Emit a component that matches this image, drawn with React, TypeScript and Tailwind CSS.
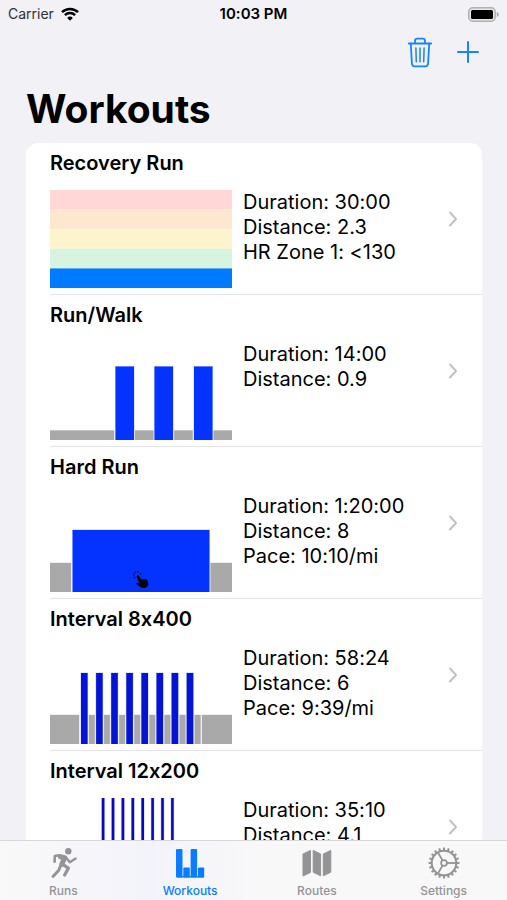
import React from "react";

type Bar = { x: number; w: number; h: number; fill: string };

type Workout = {
  name: string;
  details: string[];
  bars: Bar[];
  zones?: string[];
  tap?: boolean;
};

const GREY = "#a9a9a9";
const BLUE = "#0433ff";
const DEEP = "#0414d2";
const NAVY = "#0a08bc";
const CHART_W = 182;
const CHART_H = 98;

const intervals: Bar[] = [
  { x: 0, w: 29, h: 29, fill: GREY },
  ...Array.from({ length: 8 }, (_, i) => ({ x: 31 + i * 15.1, w: 6.6, h: 71, fill: DEEP })),
  ...Array.from({ length: 8 }, (_, i) => ({ x: 39 + i * 15.1, w: 5.8, h: 29, fill: GREY })),
  { x: 152, w: 30, h: 29, fill: GREY },
];

const sprints: Bar[] = [
  { x: 0, w: 50, h: 24, fill: GREY },
  ...Array.from({ length: 8 }, (_, i) => ({ x: 51.8 + i * 9.9, w: 2.6, h: 98, fill: NAVY })),
  { x: 132, w: 50, h: 24, fill: GREY },
];

const workouts: Workout[] = [
  {
    name: "Recovery Run",
    details: ["Duration: 30:00", "Distance: 2.3", "HR Zone 1: <130"],
    bars: [],
    zones: ["#fed7d6", "#fee7cf", "#fdf3cd", "#d7f4e0", "#007aff"],
  },
  {
    name: "Run/Walk",
    details: ["Duration: 14:00", "Distance: 0.9"],
    bars: [
      { x: 0, w: 64, h: 9.5, fill: GREY },
      { x: 65.5, w: 18.5, h: 73.5, fill: BLUE },
      { x: 85, w: 18.5, h: 9.5, fill: GREY },
      { x: 104.5, w: 18.5, h: 73.5, fill: BLUE },
      { x: 124.2, w: 18.5, h: 9.5, fill: GREY },
      { x: 144, w: 18.5, h: 73.5, fill: BLUE },
      { x: 163.7, w: 18.3, h: 9.5, fill: GREY },
    ],
  },
  {
    name: "Hard Run",
    details: ["Duration: 1:20:00", "Distance: 8", "Pace: 10:10/mi"],
    bars: [
      { x: 0, w: 21, h: 29, fill: GREY },
      { x: 22.6, w: 136.8, h: 62, fill: BLUE },
      { x: 160.5, w: 21.5, h: 29, fill: GREY },
    ],
    tap: true,
  },
  {
    name: "Interval 8x400",
    details: ["Duration: 58:24", "Distance: 6", "Pace: 9:39/mi"],
    bars: intervals,
  },
  {
    name: "Interval 12x200",
    details: ["Duration: 35:10", "Distance: 4.1"],
    bars: sprints,
  },
];

function Chart({ workout }: { workout: Workout }) {
  return (
    <svg width={CHART_W} height={CHART_H} viewBox={`0 0 ${CHART_W} ${CHART_H}`} className="shrink-0" aria-hidden="true">
      {workout.zones?.map((fill, i) => (
        <rect key={fill} x={0} y={i * 19.6} width={CHART_W} height={19.6} fill={fill} />
      ))}
      {workout.bars.map((b) => (
        <rect
          key={b.x}
          x={b.x}
          y={CHART_H - b.h}
          width={b.w}
          height={b.h}
          fill={b.fill}
          stroke={b.fill === GREY ? "#dedede" : "#c3cbff"}
          strokeWidth={1}
          paintOrder="stroke"
        />
      ))}
      {workout.tap && (
        <g transform="translate(84 78)">
          <path d="M1.2 6.2A3.6 3.6 0 1 1 7 3.4" fill="none" stroke="#05103f" strokeWidth="1.1" strokeDasharray="2 .8" />
          <path
            d="M3 3.6c.7-.8 1.7-.4 2.1.4l2 3.4c.6-.6 1.500-.5 2 0 .6-.6 1.500-.5 2 .1.700-.4 1.600-.2 2 .5.700 1.300 1.300 2.900 1.100 4.500-.2 1.900-1.700 3.200-3.500 3.500-2 .3-3.600-.2-5.100-1.400L2.500 12.300c-.8-.7.1-1.900 1.100-1.500l1.700.7L2.800 5.200c-.2-.6-.2-1.200.2-1.600z"
            fill="#070707"
          />
        </g>
      )}
    </svg>
  );
}

function WorkoutRow({ workout, last }: { workout: Workout; last: boolean }) {
  return (
    <li className="pl-6">
      <a href="#workout" className={"flex h-[152px] flex-col " + (last ? "" : "border-b border-[#e4e4e6]")}>
        <h2 className="h-[47px] shrink-0 pt-2 text-[20px] leading-6 font-semibold">{workout.name}</h2>
        <div className="flex">
          <Chart workout={workout} />
          <div className="flex-1 pl-[11px] text-[20px] leading-[25px]">
            {workout.details.map((d) => (
              <p key={d}>{d}</p>
            ))}
          </div>
          <svg width="10" height="18" viewBox="0 0 10 18" className="mt-5 mr-6 shrink-0" aria-hidden="true">
            <path d="M2 2.500 8 9l-6 6.500" fill="none" stroke="#c2c2c5" strokeWidth="2" strokeLinecap="round" strokeLinejoin="round" />
          </svg>
        </div>
      </a>
    </li>
  );
}

function RunnerIcon() {
  return (
    <svg width="30" height="32" viewBox="0 0 30 32" aria-hidden="true">
      <g fill="none" stroke="currentColor" strokeLinecap="round" strokeLinejoin="round">
        <circle cx="20.300" cy="4.200" r="3.200" fill="currentColor" stroke="none" />
        <path d="M12.500 9.800 16.600 10.800 13.800 17.200" strokeWidth="5" />
        <path d="M11.300 8.300 6.800 9 6.600 14.600" strokeWidth="2.600" />
        <path d="M18 10.600 21.800 15.200 27.600 11.600" strokeWidth="2.400" />
        <path d="M13 18 10.600 23.400 5 29.400" strokeWidth="3" />
        <path d="M14.200 17.200 20.400 21.200 16.600 28" strokeWidth="3.200" />
      </g>
    </svg>
  );
}

function BarsIcon() {
  return (
    <svg width="30" height="32" viewBox="0 0 30 32" fill="currentColor" aria-hidden="true">
      <rect x="1" y="2" width="6.500" height="28.500" rx="1" />
      <rect x="8.300" y="20.500" width="6.500" height="10" rx="1" />
      <rect x="15.600" y="2" width="6.500" height="28.500" rx="1" />
      <rect x="22.900" y="20.500" width="6.300" height="10" rx="1" />
      <rect x="2" y="29" width="26.500" height="1.500" />
    </svg>
  );
}

function MapIcon() {
  return (
    <svg width="30" height="32" viewBox="0 0 30 32" fill="currentColor" stroke="currentColor" strokeWidth="1" strokeLinejoin="round" aria-hidden="true">
      <path d="M1 7 8.500 3.400V25.400L1 29z" />
      <path d="M11.200 3.400 18.600 7V28.800L11.200 25.200z" />
      <path d="M21.300 7 28.800 3.400V25.200L21.300 28.800z" />
    </svg>
  );
}

function GearIcon() {
  const teeth = Array.from({ length: 20 }, (_, i) => i * 18);
  return (
    <svg width="32" height="32" viewBox="-16 -16 32 32" fill="none" stroke="currentColor" aria-hidden="true">
      <circle r="12.300" strokeWidth="2" />
      {teeth.map((a) => (
        <path key={a} d="M0-12.500V-15.400" strokeWidth="2" transform={`rotate(${a})`} />
      ))}
      <circle r="2.900" strokeWidth="1.700" />
      <path d="M3 0H12" strokeWidth="1.800" />
      <path d="M3 0H12" strokeWidth="1.800" transform="rotate(120)" />
      <path d="M3 0H12" strokeWidth="1.800" transform="rotate(240)" />
    </svg>
  );
}

const tabs = [
  { label: "Runs", Icon: RunnerIcon, active: false },
  { label: "Workouts", Icon: BarsIcon, active: true },
  { label: "Routes", Icon: MapIcon, active: false },
  { label: "Settings", Icon: GearIcon, active: false },
];

export default function App() {
  return (
    <div className="flex h-screen flex-col bg-[#f1f1f6] font-['Inter','Liberation_Sans',sans-serif] text-black [font-feature-settings:'calt'_0]">
      <div className="grid h-7 shrink-0 grid-cols-3 items-center px-2 text-[15px] leading-5">
        <div className="flex items-center gap-1.5 text-[14px] text-[#303033]">
          <span>Carrier</span>
          <svg width="20" height="14" viewBox="0 0 18 14" fill="none" stroke="#000" strokeWidth="2.500" aria-label="Wi-Fi">
            <path d="M1 5.200a11.500 11.500 0 0 1 16 0" />
            <path d="M3.900 8.200a7.300 7.300 0 0 1 10.200 0" />
            <path d="M9 13.800 6.200 10.900a4 4 0 0 1 5.600 0z" fill="#000" stroke="none" />
          </svg>
        </div>
        <div className="text-center font-semibold">10:03 PM</div>
        <svg width="31" height="15" viewBox="0 0 31 15" className="justify-self-end" aria-label="Battery full">
          <rect x=".8" y=".8" width="26.400" height="13.400" rx="4" fill="#e6e6e8" stroke="#b0b0b2" strokeWidth="1.500" />
          <rect x="3" y="3" width="22" height="9" rx="1.500" fill="#000" />
          <path d="M28.800 5v5c1.200-.4 1.900-1.400 1.900-2.500S30 5.400 28.800 5z" fill="#a5a5a8" />
        </svg>
      </div>

      <main className="min-h-0 flex-1 overflow-y-auto [scrollbar-width:none]">
        <div className="flex h-12 items-center justify-end gap-6 pr-7 text-[#1784ff]">
          <button type="button" aria-label="Delete workouts">
            <svg width="26" height="32" viewBox="0 0 26 32" fill="none" stroke="currentColor" strokeWidth="1.800" strokeLinecap="round" strokeLinejoin="round">
              <path d="M1.800 7.500H24.200" />
              <path d="M8 7V4.800c0-1.300.9-2.200 2.200-2.200h5.600C17.100 2.600 18 3.500 18 4.800V7" />
              <path d="M3.800 7.700 4.900 27.500c.1 1.800 1.100 2.800 2.800 2.800h10.600c1.700 0 2.700-1 2.800-2.800L22.200 7.700" />
              <path d="M8.900 12 9.300 25.700M13 12V25.700M17.100 12 16.700 25.700" strokeWidth="1.500" />
            </svg>
          </button>
          <button type="button" aria-label="Add workout">
            <svg width="22" height="22" viewBox="0 0 22 22" fill="none" stroke="currentColor" strokeWidth="2" strokeLinecap="round">
              <path d="M1 11H21M11 1V21" />
            </svg>
          </button>
        </div>
        <h1 className="px-[26px] pt-[9px] pb-[10px] text-[39px] leading-[48px] font-bold">Workouts</h1>
        <ul className="mr-[25px] ml-[26px] overflow-hidden rounded-xl bg-white">
          {workouts.map((w, i) => (
            <WorkoutRow key={w.name} workout={w} last={i === workouts.length - 1} />
          ))}
        </ul>
      </main>

      <nav className="grid h-[60px] shrink-0 grid-cols-4 border-t border-[#d8d8dc] bg-linear-to-r from-[#f9f9f9] via-[#f3f3fb] via-30% to-[#f8f8f9] to-50%">
        {tabs.map(({ label, Icon, active }) => (
          <a
            key={label}
            href={"#" + label.toLowerCase()}
            aria-current={active ? "page" : undefined}
            className={"flex flex-col items-center gap-1 pt-[6px] text-[12px] leading-4 font-medium " + (active ? "text-[#0a7cff]" : "text-[#949496]")}
          >
            <Icon />
            <span>{label}</span>
          </a>
        ))}
      </nav>
    </div>
  );
}
